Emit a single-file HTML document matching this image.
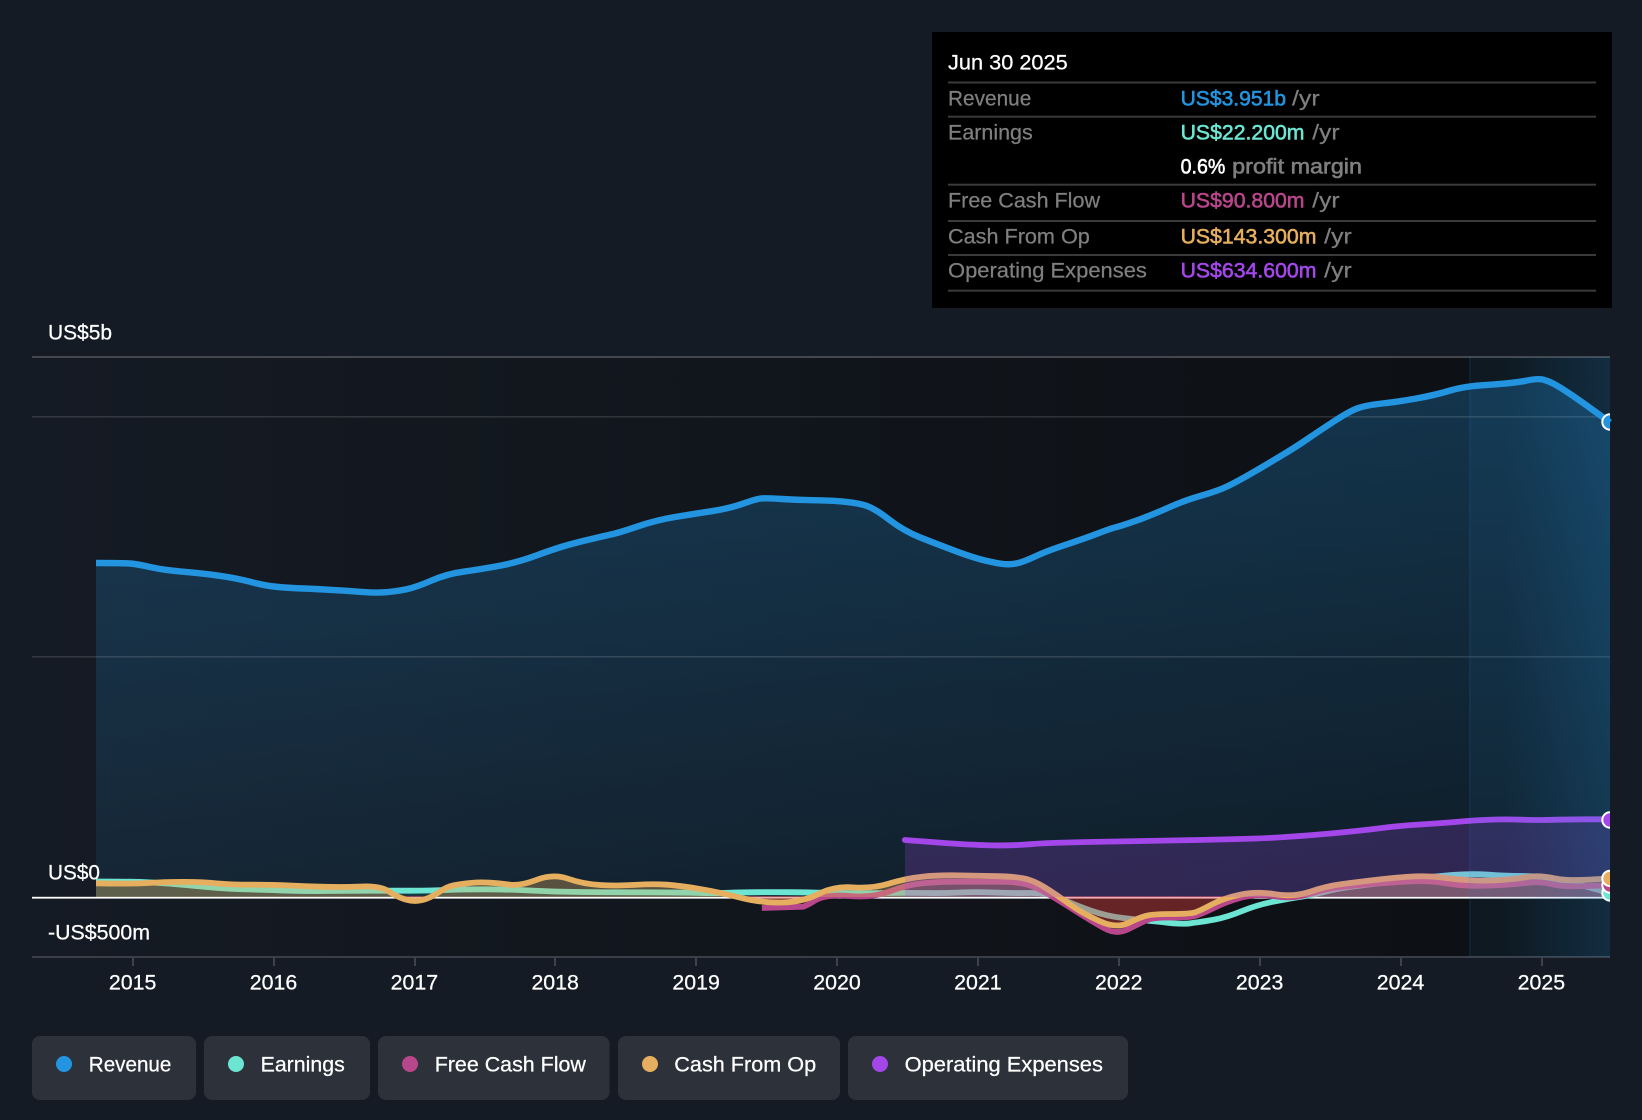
<!DOCTYPE html>
<html lang="en">
<head>
<meta charset="utf-8">
<title>Revenue and Earnings Chart</title>
<style>
html,body{margin:0;padding:0;background:#151b24;width:1642px;height:1120px;overflow:hidden}
svg{display:block}
text{font-family:"Liberation Sans",Arial,sans-serif;font-size:21.6px}
.w{fill:#fff;stroke:#fff;stroke-width:.25px}
.g{fill:#7f7f7f;stroke:#7f7f7f;stroke-width:.25px}
.m{stroke-width:.6px}
</style>
</head>
<body>
<svg width="1642" height="1120" viewBox="0 0 1642 1120" xmlns="http://www.w3.org/2000/svg">
<defs>
<linearGradient id="plot" gradientUnits="userSpaceOnUse" x1="32" y1="0" x2="1469" y2="0">
<stop offset="0" stop-color="#151b24"/><stop offset="1" stop-color="#0d1014"/>
</linearGradient>
<linearGradient id="rev" gradientUnits="userSpaceOnUse" x1="0" y1="400" x2="0" y2="897">
<stop offset="0" stop-color="#2394df" stop-opacity=".27"/><stop offset="1" stop-color="#2394df" stop-opacity=".09"/>
</linearGradient>
<linearGradient id="band" gradientUnits="userSpaceOnUse" x1="1470" y1="0" x2="1610" y2="0">
<stop offset="0" stop-color="#2394df" stop-opacity=".07"/><stop offset=".25" stop-color="#2394df" stop-opacity=".07"/><stop offset="1" stop-color="#2394df" stop-opacity=".22"/>
</linearGradient>
<clipPath id="up"><rect x="32" y="340" width="1578" height="557"/></clipPath>
<clipPath id="dn"><rect x="32" y="896" width="1578" height="61"/></clipPath>
<clipPath id="all"><rect x="0" y="0" width="1610" height="1000"/></clipPath>
</defs>

<rect width="1642" height="1120" fill="#151b24"/>
<rect x="32" y="357" width="1578" height="600" fill="url(#plot)"/>

<!-- revenue fill -->
<path fill="url(#rev)" d="M96,897 L96,563 Q123.3,563 130,563.5 Q136.7,564 150,567 Q163.3,570 180,571.4 Q196.7,572.7 211.7,574.7 Q226.7,576.7 235,578.4 Q243.3,580 255,583 Q266.7,586 278.4,587 Q290,588 303.4,588.5 Q316.7,589 331.7,589.9 Q346.7,590.7 361.7,591.9 Q376.7,593 386.7,592.2 Q396.7,591.3 406.7,589.2 Q416.7,587 431.7,580.5 Q446.7,574 463.4,571.7 Q480,569.3 498.4,566 Q516.7,562.7 536.7,555.4 Q556.7,548 570,544.4 Q583.3,540.7 596.7,537.7 Q610,534.7 615,533.5 Q620,532.3 638.4,526.2 Q656.7,520 675,517 Q693.3,514 711.7,511.2 Q730,508.3 743.4,503.5 Q756.7,498.7 761.7,498.4 Q766.7,498 781.7,499 Q796.7,500 811.7,500.2 Q826.7,500.3 840,501.3 Q853.3,502.3 863.3,504.8 Q873.3,507.3 888.3,519 Q903.3,530.7 920,537.4 Q936.7,544 955,550.9 Q973.3,557.7 985,560.5 Q996.7,563.3 1003.4,564 Q1010,564.7 1016.7,563.4 Q1023.3,562 1035,556.5 Q1046.7,551 1065,545 Q1083.3,539 1096.7,533.9 Q1110,528.7 1116,527.2 Q1122,525.7 1137,520.4 Q1152,515 1168.7,507.5 Q1185.3,500 1202,495.4 Q1218.7,490.7 1228.7,485.7 Q1238.7,480.7 1252,473 Q1265.3,465.3 1280.3,456.3 Q1295.3,447.3 1307,439.3 Q1318.7,431.3 1333.7,421.5 Q1348.7,411.7 1357,408.5 Q1365.3,405.3 1382,403.5 Q1398.7,401.7 1417,398.4 Q1435.3,395 1450.3,390.5 Q1465.3,386 1487,384.9 Q1508.7,383.7 1523.7,381.2 Q1540,377.5 1545.4,380.4 Q1552,382 1567,391.9 Q1582,401.7 1610,422.5 L1610,897 Z"/>

<!-- grid -->
<rect x="32" y="356" width="1578" height="2" fill="#44474e"/>
<rect x="32" y="416" width="1578" height="1.6" fill="#fff" fill-opacity=".13"/>
<rect x="32" y="656" width="1578" height="1.6" fill="#fff" fill-opacity=".13"/>
<rect x="32" y="956" width="1578" height="2" fill="#3b3e46"/>
<g fill="#3f424b">
<rect x="132" y="957" width="2" height="9"/><rect x="273" y="957" width="2" height="9"/><rect x="414" y="957" width="2" height="9"/><rect x="554" y="957" width="2" height="9"/><rect x="695" y="957" width="2" height="9"/><rect x="836" y="957" width="2" height="9"/><rect x="977" y="957" width="2" height="9"/><rect x="1118" y="957" width="2" height="9"/><rect x="1259" y="957" width="2" height="9"/><rect x="1400" y="957" width="2" height="9"/><rect x="1541" y="957" width="2" height="9"/>
</g>
<rect x="32" y="896.8" width="1578" height="1.8" fill="#fff"/>

<!-- revenue line -->
<path fill="none" stroke="#2394df" stroke-width="6.4" stroke-linejoin="round" d="M96,563 Q123.3,563 130,563.5 Q136.7,564 150,567 Q163.3,570 180,571.4 Q196.7,572.7 211.7,574.7 Q226.7,576.7 235,578.4 Q243.3,580 255,583 Q266.7,586 278.4,587 Q290,588 303.4,588.5 Q316.7,589 331.7,589.9 Q346.7,590.7 361.7,591.9 Q376.7,593 386.7,592.2 Q396.7,591.3 406.7,589.2 Q416.7,587 431.7,580.5 Q446.7,574 463.4,571.7 Q480,569.3 498.4,566 Q516.7,562.7 536.7,555.4 Q556.7,548 570,544.4 Q583.3,540.7 596.7,537.7 Q610,534.7 615,533.5 Q620,532.3 638.4,526.2 Q656.7,520 675,517 Q693.3,514 711.7,511.2 Q730,508.3 743.4,503.5 Q756.7,498.7 761.7,498.4 Q766.7,498 781.7,499 Q796.7,500 811.7,500.2 Q826.7,500.3 840,501.3 Q853.3,502.3 863.3,504.8 Q873.3,507.3 888.3,519 Q903.3,530.7 920,537.4 Q936.7,544 955,550.9 Q973.3,557.7 985,560.5 Q996.7,563.3 1003.4,564 Q1010,564.7 1016.7,563.4 Q1023.3,562 1035,556.5 Q1046.7,551 1065,545 Q1083.3,539 1096.7,533.9 Q1110,528.7 1116,527.2 Q1122,525.7 1137,520.4 Q1152,515 1168.7,507.5 Q1185.3,500 1202,495.4 Q1218.7,490.7 1228.7,485.7 Q1238.7,480.7 1252,473 Q1265.3,465.3 1280.3,456.3 Q1295.3,447.3 1307,439.3 Q1318.7,431.3 1333.7,421.5 Q1348.7,411.7 1357,408.5 Q1365.3,405.3 1382,403.5 Q1398.7,401.7 1417,398.4 Q1435.3,395 1450.3,390.5 Q1465.3,386 1487,384.9 Q1508.7,383.7 1523.7,381.2 Q1540,377.5 1545.4,380.4 Q1552,382 1567,391.9 Q1582,401.7 1610,422.5"/>

<g clip-path="url(#all)">
<!-- earnings -->
<g clip-path="url(#up)"><path fill="#6ce5d2" fill-opacity=".1" d="M96,897 L96,881.5 Q133,881.5 149.9,882.4 Q166.7,883.3 184.9,885 Q203,886.7 216.5,887.9 Q230,889 251.5,889.5 Q273,890 289.9,890.7 Q306.7,891.3 324.9,891 Q343,890.7 368,890.7 Q393,890.7 411.5,890.7 Q430,890.7 445,890 Q460,889.3 483.4,889.3 Q506.7,889.3 529.9,890.5 Q553,891.7 579.9,892 Q606.7,892.3 639.9,892.3 Q673,892.3 694.9,892.8 Q716.7,893.3 728.4,892.8 Q740,892.3 756.5,892.2 Q773,892 789.9,892.2 Q806.7,892.3 813.4,892.5 Q820,892.7 846,893 Q872,893.3 889,893 Q906,892.7 925,893 Q944,893.3 959.5,892.5 Q975,891.7 994,892.5 Q1013,893.3 1030.4,893 Q1047.7,892.7 1061.4,898.9 L1290,898.3 Q1313,895 1324.9,891.7 Q1336.7,888.3 1354.9,886.2 Q1373,884 1394.9,881.2 Q1416.7,878.3 1443.4,875.8 Q1470,873.3 1488.4,874.7 Q1506.7,876 1523.4,876 Q1540,876 1555,878.9 Q1570,881.7 1610,893.3 L1610,897 Z"/></g>
<path fill="none" stroke="#6ce5d2" stroke-width="5.8" stroke-linejoin="round" d="M96,881.5 Q133,881.5 149.9,882.4 Q166.7,883.3 184.9,885 Q203,886.7 216.5,887.9 Q230,889 251.5,889.5 Q273,890 289.9,890.7 Q306.7,891.3 324.9,891 Q343,890.7 368,890.7 Q393,890.7 411.5,890.7 Q430,890.7 445,890 Q460,889.3 483.4,889.3 Q506.7,889.3 529.9,890.5 Q553,891.7 579.9,892 Q606.7,892.3 639.9,892.3 Q673,892.3 694.9,892.8 Q716.7,893.3 728.4,892.8 Q740,892.3 756.5,892.2 Q773,892 789.9,892.2 Q806.7,892.3 813.4,892.5 Q820,892.7 846,893 Q872,893.3 889,893 Q906,892.7 925,893 Q944,893.3 959.5,892.5 Q975,891.7 994,892.5 Q1013,893.3 1030.4,893 Q1047.7,892.7 1061.4,898.9 Q1075,905 1090.5,910.5 Q1106,916 1123,918 Q1140,920 1161.5,922 Q1183,925 1193,922.9 Q1203,921.7 1214.9,919.5 Q1226.7,917.3 1241.7,911.2 Q1256.7,905 1273.4,901.7 Q1290,898.3 1301.5,896.7 Q1313,895 1324.9,891.7 Q1336.7,888.3 1354.9,886.2 Q1373,884 1394.9,881.2 Q1416.7,878.3 1443.4,875.8 Q1470,873.3 1488.4,874.7 Q1506.7,876 1523.4,876 Q1540,876 1555,878.9 Q1570,881.7 1610,893.3"/>

<!-- free cash flow -->
<g clip-path="url(#up)"><path fill="#b8468a" fill-opacity=".18" d="M815,900.4 Q827,894 849.5,896 Q872,898 889.3,891.5 Q906.5,885 922,883.4 Q937.5,881.7 958.3,881.7 Q979,881.7 998,881.7 Q1016.7,881.7 1026.9,884.5 Q1037,887.3 1049,894.5 L1060,900 L1240,900 Q1256.7,893.3 1275,896.3 Q1293.3,899.3 1310,893.8 Q1326.7,888.3 1343.4,886.7 Q1360,885 1380,883.4 Q1400,881.7 1415,881.2 Q1430,880.7 1446.7,883.4 Q1463.3,886 1476.7,885.9 Q1490,885.7 1503.4,884.9 Q1516.7,884 1528.4,882.7 Q1540,881.3 1553.4,884.5 Q1566.7,887.7 1610,885 L1610,900 Z"/></g>
<path fill="none" stroke="#b8468a" stroke-width="5.8" stroke-linejoin="round" d="M761.8,908 L803,906.7 Q808,905 815,900.4 Q827,894 849.5,896 Q872,898 889.3,891.5 Q906.5,885 922,883.4 Q937.5,881.7 958.3,881.7 Q979,881.7 998,881.7 Q1016.7,881.7 1026.9,884.5 Q1037,887.3 1049,894.5 Q1061,901.7 1076.7,911.7 Q1092.4,921.7 1104.5,928.4 Q1116.5,935 1128.3,929.2 Q1140,923.3 1146.5,920.3 Q1153,917.3 1171.5,917.5 Q1190,917.7 1196.5,915.5 Q1203,913.3 1214.9,907.5 Q1226.7,901.7 1241.7,897.5 Q1256.7,893.3 1275,896.3 Q1293.3,899.3 1310,893.8 Q1326.7,888.3 1343.4,886.7 Q1360,885 1380,883.4 Q1400,881.7 1415,881.2 Q1430,880.7 1446.7,883.4 Q1463.3,886 1476.7,885.9 Q1490,885.7 1503.4,884.9 Q1516.7,884 1528.4,882.7 Q1540,881.3 1553.4,884.5 Q1566.7,887.7 1610,885"/>

<!-- cash from op fill (positive) and negative red -->
<g clip-path="url(#up)"><path fill="#e5af5f" fill-opacity=".33" d="M96,897 L96,883.3 Q133.3,884 150,882.9 Q166.7,881.7 185,881.9 Q203.3,882 216.7,883.4 Q230,884.7 251.7,884.7 Q273.3,884.7 290,885.5 Q306.7,886.3 325,886.8 Q343.3,887.3 361.7,886.5 Q380,885.7 388.4,891.2 Q396.7,896.7 405,899.4 Q413.3,902 421.7,900.2 Q430,898.3 438.4,892.5 Q446.7,886.7 453.4,885.4 Q460,884 470,883 Q480,882 490,882.7 Q500,883.3 510,884.7 Q520,886 536.7,879.8 Q553.3,873.5 568.3,878.8 Q583.3,884 600,885 Q616.7,886 635,884.9 Q653.3,883.7 666.7,884.7 Q680,885.7 698.4,888.7 Q716.7,891.7 738.4,897.2 Q760,903 781.5,902.5 Q803,902 818.5,894 Q834,886 853,887.4 Q872,888.7 889.3,883.5 Q906.5,878.3 922,876.7 Q937.5,875 958.3,875.4 Q979,875.7 998,876.2 Q1016.7,876.7 1025.3,878.7 Q1033.9,880.7 1044.2,887 Q1054.5,893.3 1068.3,903.3 L1211.7,904.5 Q1223.3,898.3 1240,894.7 Q1256.7,891 1275,894.2 Q1293.3,897.3 1310,891.7 Q1326.7,886 1343.4,883.9 Q1360,881.7 1380,879.4 Q1400,877 1415,876.4 Q1430,875.7 1445,877.9 Q1460,880 1475,880.5 Q1490,881 1503.4,879.9 Q1516.7,878.7 1528.4,876.9 Q1540,875 1555,878.4 Q1570,881.7 1610,878.3 L1610,897 Z"/></g>
<g clip-path="url(#dn)"><path fill="#e03c3c" fill-opacity=".42" d="M388,896 Q396.7,896.7 405,899.4 Q413.3,902 421.7,900.2 Q430,898.3 436,896 Z M735,896 Q760,903 781.5,902.5 Q803,902 816,896 Z M1052,896 L1054.5,893.3 Q1060,897 1068.3,903.3 Q1082,913.3 1099.3,921 Q1116.5,929 1128.3,923 Q1140,917.3 1146.7,915.7 Q1153.3,914 1171.7,914 Q1190,914 1195,912.4 Q1200,910.7 1211.7,904.5 Q1223.3,898.3 1230,896 Z"/></g>

<!-- cash from op line -->
<path fill="none" stroke="#e5af5f" stroke-width="5.8" stroke-linejoin="round" d="M96,883.3 Q133.3,884 150,882.9 Q166.7,881.7 185,881.9 Q203.3,882 216.7,883.4 Q230,884.7 251.7,884.7 Q273.3,884.7 290,885.5 Q306.7,886.3 325,886.8 Q343.3,887.3 361.7,886.5 Q380,885.7 388.4,891.2 Q396.7,896.7 405,899.4 Q413.3,902 421.7,900.2 Q430,898.3 438.4,892.5 Q446.7,886.7 453.4,885.4 Q460,884 470,883 Q480,882 490,882.7 Q500,883.3 510,884.7 Q520,886 536.7,879.8 Q553.3,873.5 568.3,878.8 Q583.3,884 600,885 Q616.7,886 635,884.9 Q653.3,883.7 666.7,884.7 Q680,885.7 698.4,888.7 Q716.7,891.7 738.4,897.2 Q760,903 781.5,902.5 Q803,902 818.5,894 Q834,886 853,887.4 Q872,888.7 889.3,883.5 Q906.5,878.3 922,876.7 Q937.5,875 958.3,875.4 Q979,875.7 998,876.2 Q1016.7,876.7 1025.3,878.7 Q1033.9,880.7 1044.2,887 Q1054.5,893.3 1068.3,903.3 Q1082,913.3 1099.3,921 Q1116.5,929 1128.3,923 Q1140,917.3 1146.7,915.7 Q1153.3,914 1171.7,914 Q1190,914 1195,912.4 Q1200,910.7 1211.7,904.5 Q1223.3,898.3 1240,894.7 Q1256.7,891 1275,894.2 Q1293.3,897.3 1310,891.7 Q1326.7,886 1343.4,883.9 Q1360,881.7 1380,879.4 Q1400,877 1415,876.4 Q1430,875.7 1445,877.9 Q1460,880 1475,880.5 Q1490,881 1503.4,879.9 Q1516.7,878.7 1528.4,876.9 Q1540,875 1555,878.4 Q1570,881.7 1610,878.3"/>

<!-- opex -->
<path fill="#a347ea" fill-opacity=".22" d="M905,897 L905,840 L938,842.5 Q972,845 992.5,845.4 Q1013,845.7 1030.4,844.2 Q1047.7,842.7 1093.9,841.9 Q1140,841 1196.5,840 Q1253,839 1279.9,837.4 Q1306.7,835.7 1333.4,833.2 Q1360,830.7 1380,828.2 Q1400,825.7 1420,824.5 Q1440,823.3 1455,822 Q1470,820.7 1486.7,819.9 Q1503.3,819 1521.7,819.7 Q1540,820.3 1553.4,819.8 Q1566.7,819.3 1590,819.3 L1610,819.3 L1610,897 Z"/>
<path fill="none" stroke="#a347ea" stroke-width="5.8" stroke-linejoin="round" stroke-linecap="round" d="M904.8,840 L938,842.5 Q972,845 992.5,845.4 Q1013,845.7 1030.4,844.2 Q1047.7,842.7 1093.9,841.9 Q1140,841 1196.5,840 Q1253,839 1279.9,837.4 Q1306.7,835.7 1333.4,833.2 Q1360,830.7 1380,828.2 Q1400,825.7 1420,824.5 Q1440,823.3 1455,822 Q1470,820.7 1486.7,819.9 Q1503.3,819 1521.7,819.7 Q1540,820.3 1553.4,819.8 Q1566.7,819.3 1590,819.3 L1612,819.3"/>

<!-- highlight band -->
<rect x="1470" y="357" width="140" height="600" fill="url(#band)"/>
<rect x="1469" y="357" width="1.5" height="600" fill="#2394df" fill-opacity=".13"/>

<!-- end markers -->
<g stroke="#fff" stroke-width="2">
<circle cx="1610" cy="422" r="7.7" fill="#2394df"/>
<circle cx="1610" cy="893" r="7.7" fill="#6ce5d2"/>
<circle cx="1610" cy="885" r="7.7" fill="#b8468a"/>
<circle cx="1610" cy="878.4" r="7.7" fill="#e5af5f"/>
<circle cx="1610" cy="820" r="7.7" fill="#a347ea"/>
</g>
</g>

<!-- axis labels -->
<text class="w" x="48" y="339.6" textLength="64" lengthAdjust="spacingAndGlyphs">US$5b</text>
<text class="w" x="48" y="879.6" textLength="52" lengthAdjust="spacingAndGlyphs">US$0</text>
<text class="w" x="48" y="939.6" textLength="102" lengthAdjust="spacingAndGlyphs">-US$500m</text>
<g class="w" text-anchor="middle">
<text x="132.6" y="989.6" textLength="47.5" lengthAdjust="spacingAndGlyphs">2015</text>
<text x="273.5" y="989.6" textLength="47.5" lengthAdjust="spacingAndGlyphs">2016</text>
<text x="414.4" y="989.6" textLength="47.5" lengthAdjust="spacingAndGlyphs">2017</text>
<text x="555.2" y="989.6" textLength="47.5" lengthAdjust="spacingAndGlyphs">2018</text>
<text x="696.1" y="989.6" textLength="47.5" lengthAdjust="spacingAndGlyphs">2019</text>
<text x="837" y="989.6" textLength="47.5" lengthAdjust="spacingAndGlyphs">2020</text>
<text x="977.9" y="989.6" textLength="47.5" lengthAdjust="spacingAndGlyphs">2021</text>
<text x="1118.8" y="989.6" textLength="47.5" lengthAdjust="spacingAndGlyphs">2022</text>
<text x="1259.6" y="989.6" textLength="47.5" lengthAdjust="spacingAndGlyphs">2023</text>
<text x="1400.5" y="989.6" textLength="47.5" lengthAdjust="spacingAndGlyphs">2024</text>
<text x="1541.4" y="989.6" textLength="47.5" lengthAdjust="spacingAndGlyphs">2025</text>
</g>

<!-- tooltip -->
<rect x="932" y="32" width="680" height="276" fill="#000"/>
<g fill="#3a3a3a">
<rect x="948" y="81.5" width="648" height="2"/>
<rect x="948" y="115.7" width="648" height="2"/>
<rect x="948" y="183.7" width="648" height="2"/>
<rect x="948" y="220" width="648" height="2"/>
<rect x="948" y="254" width="648" height="2"/>
<rect x="948" y="289.7" width="648" height="2"/>
</g>
<text class="w" x="948" y="69.5" textLength="119.7" lengthAdjust="spacingAndGlyphs">Jun 30 2025</text>
<text class="g" x="948" y="105.6" textLength="83.3" lengthAdjust="spacingAndGlyphs">Revenue</text>
<text class="g" x="948" y="139.6" textLength="84.7" lengthAdjust="spacingAndGlyphs">Earnings</text>
<text class="g" x="948" y="207.6" textLength="152" lengthAdjust="spacingAndGlyphs">Free Cash Flow</text>
<text class="g" x="948" y="243.6" textLength="141.8" lengthAdjust="spacingAndGlyphs">Cash From Op</text>
<text class="g" x="948" y="277.6" textLength="198.9" lengthAdjust="spacingAndGlyphs">Operating Expenses</text>

<text class="m" x="1180.6" y="105.6" fill="#2394df" stroke="#2394df" textLength="105.4" lengthAdjust="spacingAndGlyphs">US$3.951b</text>
<text class="g" x="1292" y="105.6" textLength="27.6" lengthAdjust="spacingAndGlyphs">/yr</text>
<text class="m" x="1180.6" y="139.6" fill="#6ce5d2" stroke="#6ce5d2" textLength="123.9" lengthAdjust="spacingAndGlyphs">US$22.200m</text>
<text class="g" x="1312.3" y="139.6" textLength="27.2" lengthAdjust="spacingAndGlyphs">/yr</text>
<text class="m" x="1180.6" y="173.6" fill="#fff" stroke="#fff" textLength="44.7" lengthAdjust="spacingAndGlyphs">0.6%</text>
<text class="g m" x="1232.2" y="173.6" textLength="129.8" lengthAdjust="spacingAndGlyphs">profit margin</text>
<text class="m" x="1180.6" y="207.6" fill="#b8468a" stroke="#b8468a" textLength="123.9" lengthAdjust="spacingAndGlyphs">US$90.800m</text>
<text class="g" x="1312.3" y="207.6" textLength="27.2" lengthAdjust="spacingAndGlyphs">/yr</text>
<text class="m" x="1180.6" y="243.6" fill="#e5af5f" stroke="#e5af5f" textLength="135.8" lengthAdjust="spacingAndGlyphs">US$143.300m</text>
<text class="g" x="1324.2" y="243.6" textLength="27.6" lengthAdjust="spacingAndGlyphs">/yr</text>
<text class="m" x="1180.6" y="277.6" fill="#a347ea" stroke="#a347ea" textLength="135.8" lengthAdjust="spacingAndGlyphs">US$634.600m</text>
<text class="g" x="1324.2" y="277.6" textLength="27.6" lengthAdjust="spacingAndGlyphs">/yr</text>

<!-- legend -->
<g fill="#2d3139">
<rect x="32" y="1036" width="164" height="64" rx="8"/>
<rect x="204" y="1036" width="166" height="64" rx="8"/>
<rect x="378" y="1036" width="231.5" height="64" rx="8"/>
<rect x="618" y="1036" width="222" height="64" rx="8"/>
<rect x="848" y="1036" width="280" height="64" rx="8"/>
</g>
<circle cx="64" cy="1064" r="8" fill="#2394df"/>
<circle cx="236" cy="1064" r="8" fill="#6ce5d2"/>
<circle cx="410" cy="1064" r="8" fill="#b8468a"/>
<circle cx="650" cy="1064" r="8" fill="#e5af5f"/>
<circle cx="880" cy="1064" r="8" fill="#a347ea"/>
<text class="w" x="88.8" y="1071.6" textLength="82.6" lengthAdjust="spacingAndGlyphs">Revenue</text>
<text class="w" x="260.6" y="1071.6" textLength="84.2" lengthAdjust="spacingAndGlyphs">Earnings</text>
<text class="w" x="434.7" y="1071.6" textLength="151.2" lengthAdjust="spacingAndGlyphs">Free Cash Flow</text>
<text class="w" x="674.3" y="1071.6" textLength="141.8" lengthAdjust="spacingAndGlyphs">Cash From Op</text>
<text class="w" x="904.6" y="1071.6" textLength="198.3" lengthAdjust="spacingAndGlyphs">Operating Expenses</text>
</svg>
</body>
</html>
